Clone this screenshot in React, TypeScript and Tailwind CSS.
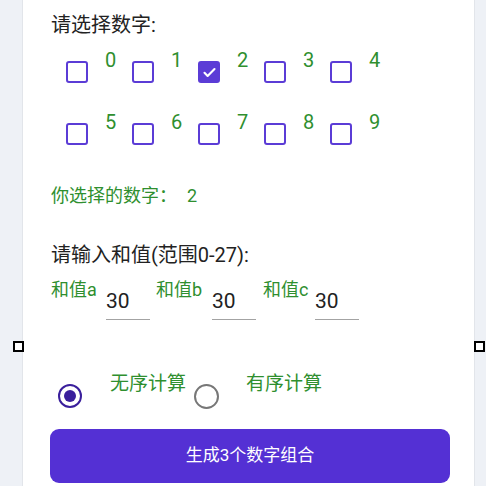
import React from 'react';

const FONT = "font-['Roboto','Noto_Sans_CJK_SC',sans-serif]";

const Checkbox: React.FC<{ n: number; checked?: boolean }> = ({ n, checked }) => (
  <label className="flex items-start w-[66px]">
    <span
      className={`mt-[11px] w-[22px] h-[22px] rounded-[3px] border-[2.5px] border-[#5b3cd6] flex items-center justify-center ${
        checked ? 'bg-[#5b3cd6]' : 'bg-white'
      }`}
    >
      {checked && (
        <svg width="15" height="15" viewBox="0 0 24 24" fill="none">
          <path d="M4 12.5l5 5L20 6.5" stroke="white" strokeWidth="3.4" strokeLinecap="round" strokeLinejoin="round" />
        </svg>
      )}
    </span>
    <span className="ml-[17px] text-[20px] leading-[20px] text-[#2f8f2f]">{n}</span>
  </label>
);

const SumField: React.FC<{ label: string; width: string }> = ({ label, width }) => (
  <div className="flex items-start">
    <span className={`${width} text-[18px] leading-[20px] text-[#2f8f2f]`}>{label}</span>
    <input
      readOnly
      value="30"
      className="mt-[8px] w-[44px] text-[21px] leading-[26px] pb-[5px] border-b-[1.5px] border-[#a3a3a3] text-[#222] outline-none"
    />
  </div>
);

export default function App() {
  return (
    <div className={`relative min-h-[486px] bg-[#eef1f6] overflow-hidden ${FONT}`}>
      <div className="ml-[22px] w-[453px] min-h-[486px] bg-white border-x border-[#e2e5ea] pl-[28px] pr-[24px] pt-[13px]">
        <div className="text-[20px] leading-[24px] text-[#222]">请选择数字:</div>

        <div className="mt-[13px] pl-[15px]">
          <div className="flex h-[62px]">
            {[0, 1, 2, 3, 4].map((n) => (
              <Checkbox key={n} n={n} checked={n === 2} />
            ))}
          </div>
          <div className="flex h-[62px]">
            {[5, 6, 7, 8, 9].map((n) => (
              <Checkbox key={n} n={n} />
            ))}
          </div>
        </div>

        <div className="mt-[10px] text-[18px] leading-[24px] text-[#2f8f2f]">
          你选择的数字：<span className="ml-[10px]">2</span>
        </div>

        <div className="mt-[35px] text-[20px] leading-[24px] text-[#222]">请输入和值(范围0-27):</div>

        <div className="mt-[13px] flex">
          <SumField label="和值a" width="w-[55px]" />
          <div className="ml-[6px]">
            <SumField label="和值b" width="w-[56px]" />
          </div>
          <div className="ml-[7px]">
            <SumField label="和值c" width="w-[52px]" />
          </div>
        </div>

        <div className="mt-[53px] flex items-start">
          <div className="mt-[11px] ml-[7px] w-[24px] h-[24px] rounded-full border-[2.5px] border-[#3a1f9c] flex items-center justify-center">
            <div className="w-[12px] h-[12px] rounded-full bg-[#3a1f9c]" />
          </div>
          <span className="ml-[28px] text-[19px] leading-[22px] text-[#2f8f2f]">无序计算</span>
          <div className="mt-[11px] ml-[8px] w-[25px] h-[25px] rounded-full border-[2.5px] border-[#777]" />
          <span className="ml-[27px] text-[19px] leading-[22px] text-[#2f8f2f]">有序计算</span>
        </div>

        <button className="mt-[20px] -ml-px w-[400px] h-[54px] rounded-[9px] bg-[#5430d4] text-white text-[17px]">
          生成3个数字组合
        </button>
      </div>

      <div className="absolute left-[13px] top-[341px] w-[11px] h-[11px] border-2 border-black bg-white" />
      <div className="absolute left-[474px] top-[341px] w-[11px] h-[11px] border-2 border-black bg-white" />
    </div>
  );
}
